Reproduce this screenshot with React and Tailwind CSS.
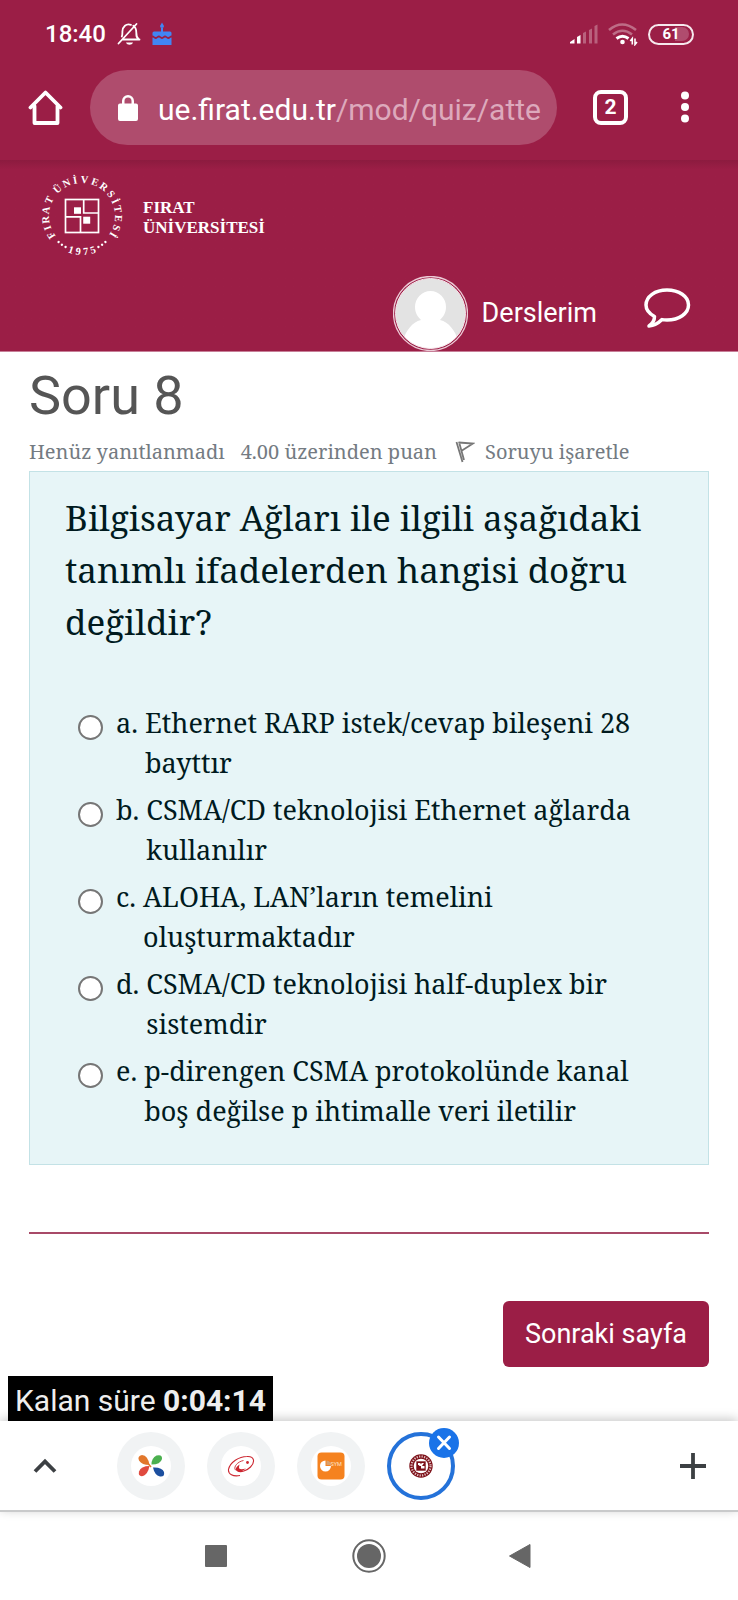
import React from "react";

const options = [
  { id: "a", text: "Ethernet RARP istek/cevap bileşeni 28 bayttır" },
  { id: "b", text: "CSMA/CD teknolojisi Ethernet ağlarda kullanılır" },
  { id: "c", text: "ALOHA, LAN’ların temelini oluşturmaktadır" },
  { id: "d", text: "CSMA/CD teknolojisi half-duplex bir sistemdir" },
  { id: "e", text: "p-direngen CSMA protokolünde kanal boş değilse p ihtimalle veri iletilir" },
];

/* Letters of the seal, each with its clockwise angle from the top. */
const sealLetters = [
  ["F", -122], ["I", -109], ["R", -96], ["A", -81], ["T", -64],
  ["Ü", -42], ["N", -25], ["İ", -11], ["V", 4], ["E", 21], ["R", 37], ["S", 53],
  ["İ", 66], ["T", 79], ["E", 94], ["S", 109], ["İ", 121],
];
const sealYear = [["1", 198], ["9", 186], ["7", 174], ["5", 162]];
const sealDots = [-152, -145, -138, 138, 145, 152];

function Seal() {
  return (
    <svg viewBox="0 0 84 84" className="size-21 shrink-0" fill="#fff" role="img" aria-label="Fırat Üniversitesi">
      <g className="font-['Liberation_Serif',serif] font-bold" fontSize="10.500" textAnchor="middle">
        {sealLetters.map(([c, a]) => (
          <text key={a} x="42" y="9" transform={`rotate(${a} 42 42)`}>{c}</text>
        ))}
        {sealYear.map(([c, a]) => (
          <text key={a} x="42" y="81" transform={`rotate(${a - 180} 42 42)`}>{c}</text>
        ))}
      </g>
      {sealDots.map((a) => (
        <circle key={a} cx="42" cy="7" r="1.2" transform={`rotate(${a} 42 42)`} />
      ))}
      <g fill="none" stroke="#fff" strokeWidth="1.700">
        <rect x="25.500" y="25.500" width="33" height="33" />
        <path d="M43.700 25.500v13.500h14.800M25.500 42.800h15v15.700" />
      </g>
      <rect x="34" y="33.300" width="7" height="6.500" />
      <rect x="43.200" y="42.700" width="7" height="7" />
    </svg>
  );
}

function StatusBar() {
  return (
    <div className="flex h-17 items-center justify-between pr-11 pl-[45px]">
      <div className="flex items-center gap-[11px]">
        <span className="text-[24px] leading-none font-medium">18:40</span>
        <svg viewBox="0 0 24 24" className="size-6" fill="none" stroke="#fff" strokeWidth="1.8" strokeLinecap="round">
          <path d="M5.500 17.500h17M21.500 17c-2.200-1.800-2.200-3-2.200-6.500 0-3-.5-5.200-3-6.800M14 2.800C9 1.200 5.600 4.600 5.400 9.500c0 2.200.1 3.500-.6 5M1.500 21.500 19.500 2" />
          <path d="M9 20.500h7c-1 3-6 3-7 0z" fill="#fff" stroke="none" />
        </svg>
        <svg viewBox="0 0 20 24" className="h-6 w-5" fill="#4285f4">
          <path d="M9 6h2v3.500h7q1.500 0 1.500 1.500v2.500c-1.700 0-1.700 1.500-3.300 1.500s-1.600-1.500-3.200-1.500S11.500 15 10 15s-1.500-1.500-3.100-1.500S5.300 15 3.700 15 2.200 13.500.5 13.500V11Q.5 9.500 2 9.500h7zM10 .5 12 4q0 2-2 2T8 4zM.5 15.500c1.700 0 1.700 1.500 3.200 1.500s1.600-1.500 3.200-1.500S8.500 17 10 17s1.600-1.500 3.200-1.500 1.600 1.500 3.200 1.500 1.600-1.500 3.100-1.500V23H.5z" />
        </svg>
      </div>
      <div className="flex items-center gap-2.5">
        <svg viewBox="0 0 28 20" className="h-5 w-7" fill="#fff">
          <path d="M0 19.500V18l4.500-3v4.500zM7 19.500v-6.500l3.500-2v8.500z" />
          <path opacity=".3" d="M13 19.500V9l3-1.500v12zM19 19.500V6l3-1.500v15zM24.500 19.500V2l3-1.500v19z" />
        </svg>
        <svg viewBox="0 0 30 24" className="h-6 w-7.5" fill="none" stroke="#fff" strokeWidth="2.600">
          <path opacity=".35" d="M1 8q13-11 27 0M5 12.500q9.500-7.500 19 0" />
          <path d="M8.500 16.500q6-4.500 12 0" strokeWidth="3" />
          <circle cx="14.500" cy="20" r="2.300" fill="#fff" stroke="none" />
          <path d="M24.300 22.500v-6l-2 2.500M27 16.500v6l2-2.500" strokeWidth="1.600" />
        </svg>
        <div className="relative flex h-[21px] w-[46px] items-center justify-center rounded-full border-2 border-[#f6e8ed]">
          <span className="h-3.5 w-9 rounded-full bg-linear-to-r from-transparent from-60% to-[#b04c6e] to-60%" />
          <span className="absolute text-[15px] leading-none font-bold">61</span>
        </div>
      </div>
    </div>
  );
}

function BrowserBar() {
  return (
    <div className="flex h-23 items-center pb-3.5 pl-7">
      <a href="#home" aria-label="Ana sayfa" className="shrink-0">
        <svg viewBox="0 0 36 36" className="size-9" fill="none" stroke="#fff" strokeWidth="3.800" strokeLinejoin="round" strokeLinecap="round">
          <path d="M2.500 18.500 17.500 3.500l15 15" />
          <path d="M6.500 17v17h23V17" />
        </svg>
      </a>
      <div className="ml-[26px] flex h-[75px] min-w-0 flex-1 items-center gap-5 overflow-hidden rounded-full bg-[#af4c6d] pr-3 pl-7">
        <svg viewBox="0 0 20 27" className="h-[27px] w-5 shrink-0" fill="#fff">
          <path fillRule="evenodd" d="M2 9.500h2V7a6 6 0 0 1 12 0v2.500h2q2 0 2 2V25q0 2-2 2H2q-2 0-2-2V11.500q0-2 2-2zm4.500 0h7V7a3.500 3.500 0 0 0-7 0z" />
        </svg>
        <span className="pt-1 text-[30px] whitespace-nowrap text-[#dda9bc]">
          <span className="text-white">ue.firat.edu.tr</span>/mod/quiz/atte
        </span>
      </div>
      <button aria-label="Sekmeler" className="ml-9 flex size-[35px] shrink-0 items-center justify-center rounded-lg border-[4px] border-white text-[21px] leading-none font-bold">
        2
      </button>
      <button aria-label="Menü" className="mr-[47px] ml-[51px] shrink-0">
        <svg viewBox="0 0 12 32" className="h-8 w-3" fill="#fff">
          <circle cx="6" cy="4.500" r="4" />
          <circle cx="6" cy="16" r="4" />
          <circle cx="6" cy="27.500" r="4" />
        </svg>
      </button>
    </div>
  );
}

function SiteHeader() {
  return (
    <div className="border-b border-[#c77f98] bg-linear-to-b from-[#8c1b3f] to-[#9b1e46] to-5% pt-3.5">
      <a href="#site" className="flex w-fit items-center gap-[19px] pl-10">
        <Seal />
        <span className="pt-1 font-['Liberation_Serif',serif] text-[17px] leading-5 font-bold">
          FIRAT
          <br />
          ÜNİVERSİTESİ
        </span>
      </a>
      <div className="flex items-center justify-end pt-[18px] pr-[47px]">
        <a href="#profile" aria-label="Profil">
          <svg viewBox="0 0 75 75" className="size-[75px]">
            <clipPath id="face"><circle cx="37.500" cy="37.500" r="35" /></clipPath>
            <circle cx="37.500" cy="37.500" r="37" fill="none" stroke="#eccbd6" strokeWidth="1.300" />
            <g clipPath="url(#face)">
              <rect width="75" height="75" fill="#e3e3e3" />
              <path d="M22 31a15.500 16 0 0 1 31 0c0 6-3 10-6 13 9 2 15 11 18 20v11H10V64c3-9 9-18 18-20-3-3-6-7-6-13z" fill="#fff" />
            </g>
            <circle cx="37.500" cy="37.500" r="35" fill="none" stroke="#f6e4ea" strokeWidth="1" />
          </svg>
        </a>
        <a href="#courses" className="ml-3.5 text-[27px]">Derslerim</a>
        <button aria-label="Mesajlar" className="mb-3 ml-[46px]">
          <svg viewBox="0 0 48 42" className="h-[42px] w-12" fill="none" stroke="#fff" strokeWidth="3.500" strokeLinejoin="round">
            <path d="M24 3c12 0 21.500 6.500 21.500 15S36 33 24 33c-2 0-3.500-.1-5-.4-3.500 3.500-7.500 6-13 6.400 3.500-2.500 5.500-6 5.500-9.500C6 26.500 3 22.500 3 18 3 9.500 12 3 24 3z" />
          </svg>
        </button>
      </div>
    </div>
  );
}

function Question() {
  return (
    <main className="px-[29px] pt-3">
      <h1 className="font-[Roboto,sans-serif] text-[54px] leading-16 text-[#555]">Soru 8</h1>
      <div className="flex items-center pt-2.5 text-[20px] leading-7 whitespace-nowrap text-[#747b82]">
        <span>Henüz yanıtlanmadı</span>
        <span className="ml-4">4.00 üzerinden puan</span>
        <a href="#flag" className="ml-[18px] flex items-center gap-2.5">
          <svg viewBox="0 0 20 22" className="h-[22px] w-5" fill="none" stroke="#777" strokeWidth="1.800">
            <path d="M1.500 1 7.500 21M4 1 9 19M3.500 1.500 18 2.500 7 9.500" />
          </svg>
          Soruyu işaretle
        </a>
      </div>
      <form className="mt-[5px] border border-[#c3e2e6] bg-[#e7f5f7] px-[35px] pt-5 pb-[33px] text-[#001a1e]">
        <p className="text-[35px] leading-[52px]">
          Bilgisayar Ağları ile ilgili aşağıdaki tanımlı ifadelerden hangisi doğru değildir?
        </p>
        <div className="flex flex-col gap-[7px] pt-[55px] pl-[13px]">
          {options.map((o) => (
            <div key={o.id} className="flex items-start pr-3 text-[27px] leading-10">
              <input
                type="radio"
                name="answer"
                id={"answer-" + o.id}
                className="mt-3 mr-[13px] size-[25px] shrink-0 appearance-none rounded-full border-2 border-[#767676] bg-white checked:border-[7px] checked:border-[#1a73e8]"
              />
              <label htmlFor={"answer-" + o.id} className="flex gap-[7px]">
                <span>{o.id}.</span>
                <span>{o.text}</span>
              </label>
            </div>
          ))}
        </div>
      </form>
      <hr className="mt-[67px] border-t-2 border-[#a84a68]" />
      <div className="flex justify-end pt-[67px]">
        <button className="h-[66px] rounded-md bg-[#9b1e46] px-[22px] font-[Roboto,sans-serif] text-[27px] text-white">
          Sonraki sayfa
        </button>
      </div>
    </main>
  );
}

function TabStrip() {
  const tab = "flex size-17 items-center justify-center rounded-full bg-[#f1f3f4]";
  const inner = "flex size-10 items-center justify-center rounded-full bg-white";
  return (
    <div className="relative flex h-[91px] items-center border-b-2 border-[#c9cacb] bg-white pr-7 pl-8 shadow-[0_-2px_10px_rgba(0,0,0,0.22)]">
      <button aria-label="Genişlet">
        <svg viewBox="0 0 26 18" className="h-[18px] w-[26px]" fill="none" stroke="#3c4043" strokeWidth="3.800">
          <path d="M3 14.500 13 4.500l10 10" />
        </svg>
      </button>
      <div className="ml-[59px] flex flex-1 items-center gap-[22px]">
        <button aria-label="Sekme 1" className={tab}>
          <span className={inner}>
            <svg viewBox="0 0 28 24" className="h-6 w-7">
              <path d="M12.500 11Q11 1.500 5 1q-5 1-3 5.500Q5 11 12.500 11z" fill="#e2772b" />
              <path d="M14.500 10.500Q14.500 4 19.500 1.500q6-1.500 5.500 3.500-1.500 5.500-10.500 5.500z" fill="#4bb04f" />
              <path d="M12.500 12Q4 12 2 17.500q-1 5.500 4 4.500Q11 20 12.500 12z" fill="#e04a3f" />
              <path d="M16 13.500q9-.5 11 4.500 1 5-4 4.500-5.500-1.500-7-9z" fill="#1c4f9f" />
              <path d="m11.500 10 2.500 3" stroke="#e2772b" strokeWidth="1.500" />
            </svg>
          </span>
        </button>
        <button aria-label="Sekme 2" className={tab}>
          <span className={inner}>
            <svg viewBox="0 0 28 22" className="h-[22px] w-7" fill="none" stroke="#cc2630">
              <path d="M13 20.500C6 22 1 19 1.500 14.500 3 7 12 1.500 20 1.500c8-.5 8 6 3.500 10.500-4 4-9.500 5.500-13 4" strokeWidth="1.100" />
              <path d="M16.500 5.500C9 7 5.500 14 9.500 15.500" strokeWidth=".9" />
              <path d="M12.500 9.500q-6 4-2.500 6.500 4.500 1.500 9-2.500-7.500 2-7-1.500z" fill="#cc2630" stroke="none" />
              <circle cx="20.500" cy="7.500" r="1.400" fill="#cc2630" stroke="none" />
            </svg>
          </span>
        </button>
        <button aria-label="Sekme 3" className={tab}>
          <span className={inner}>
            <svg viewBox="0 0 28 28" className="size-7">
              <rect x=".5" y=".5" width="27" height="27" rx="4" fill="#f5821f" />
              <path d="M8.500 8.500v5.500h5.500a5.500 5.500 0 1 1-5.500-5.500z" fill="#fff" />
              <path d="M9.500 8.500v4.500H14q0-4-4.500-4.500z" fill="#d8a06d" />
              <text x="13.500" y="13.500" fontSize="5.500" fill="#fde3c8" className="font-[Roboto,sans-serif]">SYM</text>
            </svg>
          </span>
        </button>
        <button aria-label="Fırat Üniversitesi sekmesini kapat" className="relative flex size-17 items-center justify-center rounded-full border-4 border-[#2472d9] bg-white">
          <svg viewBox="0 0 24 24" className="size-6" fill="none">
            <circle cx="12" cy="12" r="11.700" fill="#7c1018" />
            <circle cx="12" cy="12" r="9.500" stroke="#e0bfc1" strokeWidth="2.200" strokeDasharray="1.300 1.200" />
            <circle cx="12" cy="12" r="7.300" fill="#fff" />
            <rect x="7.300" y="7.300" width="9.400" height="9.400" fill="#7c1018" />
            <path d="M9 9h2.500v2H9zm4 0h2l-2 3h2.500v2.500H12V12H9.500z" fill="#fff" />
          </svg>
          <svg viewBox="0 0 30 30" className="absolute -top-2 -right-2 size-[30px]">
            <circle cx="15" cy="15" r="15" fill="#1a73e8" />
            <path d="m9.500 9 11 11.500M20.500 9l-11 11.500" stroke="#fff" strokeWidth="3" strokeLinecap="round" />
          </svg>
        </button>
      </div>
      <button aria-label="Yeni sekme">
        <svg viewBox="0 0 34 34" className="size-[34px]" stroke="#3c4043" strokeWidth="3.800">
          <path d="M17 4v26M4 17h26" />
        </svg>
      </button>
    </div>
  );
}

function NavBar() {
  return (
    <nav className="flex h-22 items-center justify-center gap-28 bg-white">
      <button aria-label="Son uygulamalar">
        <svg viewBox="0 0 40 40" className="size-10"><rect x="8" y="9" width="22" height="22" rx="1" fill="#666" /></svg>
      </button>
      <button aria-label="Ana ekran">
        <svg viewBox="0 0 40 40" className="size-10">
          <circle cx="20" cy="20" r="15.700" fill="none" stroke="#666" strokeWidth="2" />
          <circle cx="20" cy="20" r="12" fill="#666" />
        </svg>
      </button>
      <button aria-label="Geri">
        <svg viewBox="0 0 40 40" className="size-10"><path d="M8.500 20 29 8.500v23z" fill="#666" stroke="#666" strokeLinejoin="round" /></svg>
      </button>
    </nav>
  );
}

export default function App() {
  return (
    <div className="flex min-h-screen flex-col bg-white font-['Noto_Serif','DejaVu_Serif_Condensed','DejaVu_Serif',serif]">
      <header className="bg-[#9b1e46] font-[Roboto,sans-serif] text-white">
        <StatusBar />
        <BrowserBar />
        <SiteHeader />
      </header>
      <Question />
      <div className="mt-auto pl-2">
        <div role="timer" className="h-[45px] w-fit bg-black px-[7px] pt-[5px] font-[Roboto,sans-serif] text-[30px] leading-10 text-[#eee]">
          Kalan süre <b>0:04:14</b>
        </div>
      </div>
      <TabStrip />
      <NavBar />
    </div>
  );
}
